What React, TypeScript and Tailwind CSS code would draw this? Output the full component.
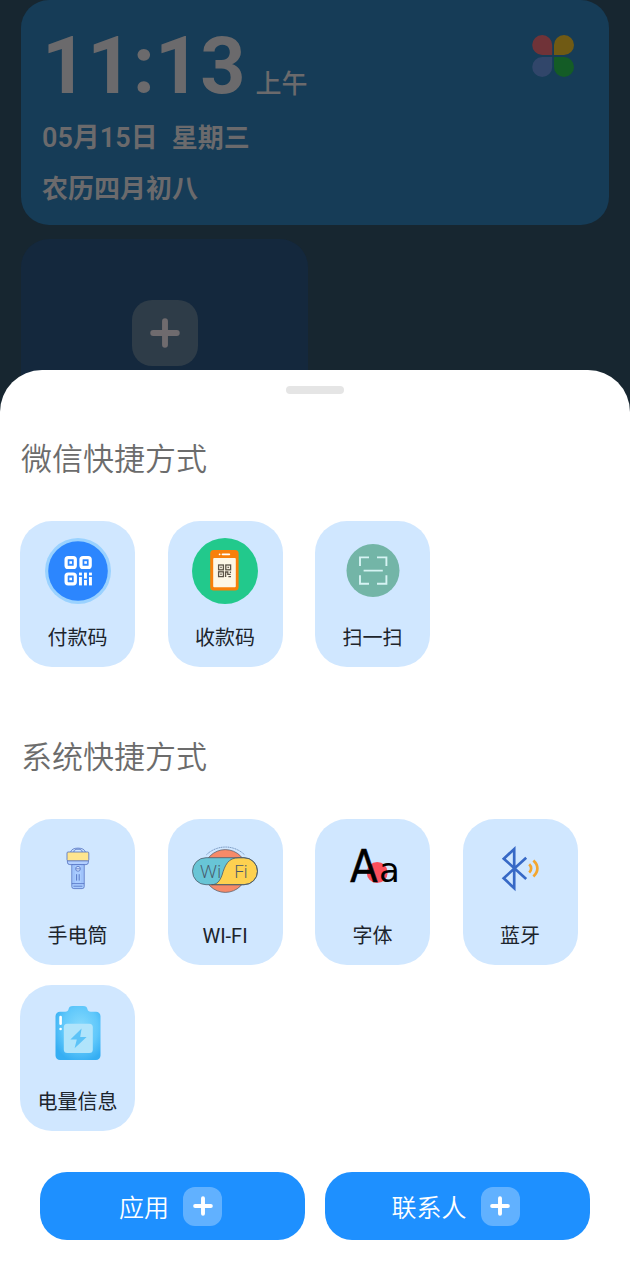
import type { ReactNode } from "react";

const PayCodeIcon = () => (
  <svg viewBox="0 0 66 66" className="size-[66px]" aria-hidden="true">
    <circle cx="33" cy="33" r="33" fill="#9ad2ff" />
    <circle cx="33" cy="33" r="29.8" fill="#2c86fe" />
    <g fill="none" stroke="#fff" strokeWidth="3.2">
      <rect x="21.1" y="19.6" width="9.2" height="9.8" rx="2" />
      <rect x="36" y="19.6" width="9.2" height="9.8" rx="2" />
      <rect x="21.1" y="36" width="9.2" height="9.8" rx="2" />
    </g>
    <g fill="#fff">
      <rect x="24.4" y="23.2" width="2.6" height="2.6" />
      <rect x="39.3" y="23.2" width="2.6" height="2.6" />
      <rect x="24.4" y="39.6" width="2.6" height="2.6" />
      <rect x="34" y="34.6" width="2.9" height="2.8" />
      <rect x="34" y="39" width="2.9" height="8.4" />
      <rect x="39" y="34.6" width="2.9" height="6" />
      <rect x="39" y="42" width="2.9" height="5.4" />
      <rect x="44" y="34.6" width="2.9" height="2.8" />
      <rect x="44" y="39" width="2.9" height="8.4" />
    </g>
  </svg>
);

const ReceiveCodeIcon = () => (
  <svg viewBox="0 0 66 66" className="size-[66px]" aria-hidden="true">
    <circle cx="33" cy="33" r="33" fill="#22c98c" />
    <rect x="18.2" y="12" width="28.4" height="40.6" rx="3.5" fill="#f8800a" />
    <rect x="21.2" y="20" width="22.6" height="29.2" rx="1" fill="#fdf7e6" />
    <rect x="29.6" y="15.4" width="8.6" height="1.8" rx="0.9" fill="#fff" />
    <circle cx="27.6" cy="16.3" r="0.9" fill="#fff" />
    <g fill="none" stroke="#5c5448" strokeWidth="1.3">
      <rect x="26.6" y="27" width="4.8" height="4.8" />
      <rect x="33.8" y="27" width="4.8" height="4.8" />
      <rect x="26.6" y="33.8" width="4.8" height="4.8" />
      <path d="M33.6 39V34h2.2v2.4h2.8M36.4 38.6h2.6M38.4 33.4v1.6" />
    </g>
    <g fill="#5c5448">
      <rect x="28.3" y="28.7" width="1.4" height="1.4" />
      <rect x="35.5" y="28.7" width="1.4" height="1.4" />
      <rect x="28.3" y="35.5" width="1.4" height="1.4" />
    </g>
  </svg>
);

const ScanIcon = () => (
  <svg viewBox="0 0 66 66" className="size-[66px]" aria-hidden="true">
    <circle cx="33" cy="32.5" r="26.5" fill="#73b5a7" />
    <path
      d="M29 19.4H20V28M37 19.4h9.400V28M29 45.800H20v-8.600M37 45.800h9.400v-8.600M23.600 32.600h19.200"
      fill="none"
      stroke="#d6f3f3"
      strokeWidth="1.9"
    />
  </svg>
);

const FlashlightIcon = () => (
  <svg viewBox="0 0 66 66" className="size-[66px]" aria-hidden="true">
    <g stroke="#4f6fc0" strokeWidth="0.8" fill="none">
      <path d="M25.6 16a7.6 5 0 0 1 14.8 0" />
      <path d="M28.8 16a4.2 2.8 0 0 1 8.4 0" />
      <path d="M22.4 24.6h21v1.6a2.4 2.4 0 0 1-2.4 2.4H24.8a2.4 2.4 0 0 1-2.4-2.4z" fill="#b3d0ff" />
      <rect x="22" y="16" width="21.8" height="8.8" rx="1" fill="#fee58e" />
      <path d="M26.8 28.6h12.4v22a2 2 0 0 1-2 2h-8.4a2 2 0 0 1-2-2z" fill="#a9ccff" />
      <path d="M29 28.8v18.6M37 28.8v18.6" stroke="#8fb3f3" strokeWidth="0.6" />
      <circle cx="33" cy="32.8" r="2.4" fill="#d5e6ff" />
      <path d="M31 32.8h4" />
      <path d="M31.6 38.2v6.4M34.2 38.2v6.4" strokeWidth="0.9" />
      <path d="M26.8 47.6h12.4M28.4 50.2h9" />
    </g>
  </svg>
);

const WifiIcon = () => (
  <svg viewBox="0 0 66 66" className="size-[66px]" aria-hidden="true">
    <path d="M14.5 18.7a27.4 27.4 0 0 1 38 0" fill="none" stroke="#5678a8" strokeWidth="0.8" strokeDasharray="1.2 0.6" />
    <circle cx="33.3" cy="35" r="21.4" fill="#f68a69" stroke="#4d5a68" strokeWidth="0.7" />
    <rect x="0.5" y="21.7" width="65" height="27" rx="13.5" fill="#68c5d6" />
    <path
      d="M47 21.7h5a13.5 13.5 0 0 1 0 27H19.5c5.5 0 8.3-3.5 10.5-9.5C33 29 36 21.7 47 21.7z"
      fill="#fed150"
      stroke="#4d5a68"
      strokeWidth="0.8"
    />
    <rect x="0.5" y="21.7" width="65" height="27" rx="13.5" fill="none" stroke="#4d5a68" strokeWidth="0.8" />
    <g fontFamily="'Open Sans', sans-serif" fontWeight="300" fontSize="19" fill="#47586a">
      <text x="8" y="42">Wi</text>
      <text x="42" y="42">Fi</text>
    </g>
  </svg>
);

const FontIcon = () => (
  <svg viewBox="0 0 66 66" className="size-[66px]" aria-hidden="true">
    <circle cx="37.2" cy="36.5" r="10.5" fill="#fb4f5b" />
    <g fontFamily="'DejaVu Sans Condensed', 'DejaVu Sans', sans-serif" fill="#000">
      <text x="10" y="46" fontSize="45" stroke="#000" strokeWidth="0.4">A</text>
      <text x="39" y="46" fontSize="34" fontFamily="'DejaVu Sans', sans-serif">a</text>
    </g>
  </svg>
);

const BluetoothIcon = () => (
  <svg viewBox="0 0 66 66" className="size-[66px]" aria-hidden="true" fill="none">
    <path d="M39.2 21.7L16.7 42.2 27.2 52.2V13L16.8 22.7 39.2 42.9" stroke="#3769c6" strokeWidth="2.7" />
    <path
      d="M42.2 28.2c2.6 2.4 2.6 6 0 8.4M46.4 24.6c5.3 4.8 5.3 11 0 15.8"
      stroke="#f3a62f"
      strokeWidth="2.7"
    />
  </svg>
);

const BatteryIcon = () => (
  <svg viewBox="0 0 66 66" className="size-[66px]" aria-hidden="true">
    <defs>
      <radialGradient id="battery" cx="0.55" cy="0.4" r="0.65">
        <stop offset="0" stopColor="#86dafc" />
        <stop offset="0.6" stopColor="#60c8fb" />
        <stop offset="1" stopColor="#35aef3" />
      </radialGradient>
    </defs>
    <path
      d="M28 4h10c3 0 4 1 4.4 3 .4 2 1.4 2.7 3.4 2.7h5.2a4.5 4.5 0 0 1 4.5 4.5v39.3a4.5 4.5 0 0 1-4.5 4.5H15a4.5 4.5 0 0 1-4.5-4.5V14.2A4.5 4.5 0 0 1 15 9.7h5.2c2 0 3-.7 3.4-2.7.4-2 1.4-3 4.4-3z"
      fill="url(#battery)"
    />
    <rect x="18.8" y="21.7" width="29" height="29.3" rx="3.5" fill="#b0e4fb" />
    <path d="M36.6 26.6L25.4 37.6h6.4l-2.2 8.6 12-11.2h-6.4z" fill="#5cc3f7" />
    <path d="M15.6 15v6.8" stroke="#fff" strokeWidth="2.6" strokeLinecap="round" />
    <circle cx="15.6" cy="27" r="1.3" fill="#fff" />
  </svg>
);

const CloverIcon = () => (
  <svg viewBox="0 0 42 42" className="size-[42px]" aria-hidden="true">
    <path d="M10.2 0a10 10 0 0 1 10 10v10h-10a10 10 0 0 1 0-20z" fill="#703338" />
    <path d="M32 0a10 10 0 0 1 0 20H22V10A10 10 0 0 1 32 0z" fill="#705a14" />
    <path d="M10.2 22h10v10a10 10 0 1 1-10-10z" fill="#31466a" />
    <path d="M22 22h10a10 10 0 1 1-10 10z" fill="#145c26" />
  </svg>
);

const PlusIcon = ({ className }: { className: string }) => (
  <svg viewBox="0 0 28 28" className={className} aria-hidden="true">
    <path d="M14 3v22M3 14h22" stroke="currentColor" strokeWidth="5.5" strokeLinecap="round" />
  </svg>
);

type Shortcut = { label: string; icon: ReactNode };

const wechatShortcuts: Shortcut[] = [
  { label: "付款码", icon: <PayCodeIcon /> },
  { label: "收款码", icon: <ReceiveCodeIcon /> },
  { label: "扫一扫", icon: <ScanIcon /> },
];

const systemShortcuts: Shortcut[] = [
  { label: "手电筒", icon: <FlashlightIcon /> },
  { label: "WI-FI", icon: <WifiIcon /> },
  { label: "字体", icon: <FontIcon /> },
  { label: "蓝牙", icon: <BluetoothIcon /> },
  { label: "电量信息", icon: <BatteryIcon /> },
];

const ShortcutGrid = ({ items }: { items: Shortcut[] }) => (
  <div className="mt-[41px] grid grid-cols-4 gap-y-5">
    {items.map((item) => (
      <button
        key={item.label}
        type="button"
        className="flex w-[115px] flex-col items-center gap-[22px] rounded-[32px] bg-[#d0e7ff] py-[17px]"
      >
        {item.icon}
        <span className="text-[20px] leading-6 whitespace-nowrap text-[#1c242c]">{item.label}</span>
      </button>
    ))}
  </div>
);

const AddButton = ({ label }: { label: string }) => (
  <button
    type="button"
    className="flex h-[68px] flex-1 items-center justify-center gap-[14px] rounded-[27px] bg-[#1e90ff] pr-1 text-[25px] text-white"
  >
    <span className="pt-1.5 leading-8 font-[350]">{label}</span>
    <span className="flex size-[39px] items-center justify-center rounded-xl bg-white/30">
      <PlusIcon className="size-5" />
    </span>
  </button>
);

const Backdrop = () => (
  <div className="px-[21px]">
    <section className="flex items-start justify-between rounded-[28px] bg-[#163c57] pr-[35px] pb-5 pl-[21px] text-[26px] text-[#6b6a6c]">
      <div className="pt-[26px]">
        <div className="flex items-baseline gap-[10px]">
          <span className="text-[79px] leading-[80px] font-bold">11:13</span>
          <span className="leading-8 font-medium">上午</span>
        </div>
        <div className="mt-4 flex gap-[14px] leading-8 font-semibold">
          <span className="text-[27px]">05月15日</span>
          <span>星期三</span>
        </div>
        <div className="mt-[19px] leading-8 font-semibold">农历四月初八</div>
      </div>
      <div className="pt-[35px]">
        <CloverIcon />
      </div>
    </section>
    <section className="mt-[14px] flex h-[287px] w-[287px] justify-center rounded-[28px] bg-[#14283d] pt-[61px]">
      <button
        type="button"
        aria-label="添加"
        className="flex size-[66px] items-center justify-center rounded-[20px] bg-[#2e3c48] text-[#6f6b6e]"
      >
        <PlusIcon className="size-[30px]" />
      </button>
    </section>
  </div>
);

export default function App() {
  return (
    <main className="min-h-screen bg-[#172630] font-['Roboto','Noto_Sans_CJK_SC',sans-serif]">
      <Backdrop />
      <div className="fixed inset-x-0 bottom-0 rounded-t-[42px] bg-white px-5 pt-4 pb-10">
        <div className="mx-auto h-2 w-[58px] rounded-full bg-[#e5e5e5]" />
        <h2 className="mt-[46px] px-px text-[31px] leading-10 font-[350] text-[#6c6c6c]">微信快捷方式</h2>
        <ShortcutGrid items={wechatShortcuts} />
        <h2 className="mt-[71px] px-px text-[31px] leading-10 font-[350] text-[#6c6c6c]">系统快捷方式</h2>
        <ShortcutGrid items={systemShortcuts} />
        <div className="mt-[41px] flex gap-5 px-5">
          <AddButton label="应用" />
          <AddButton label="联系人" />
        </div>
      </div>
    </main>
  );
}
